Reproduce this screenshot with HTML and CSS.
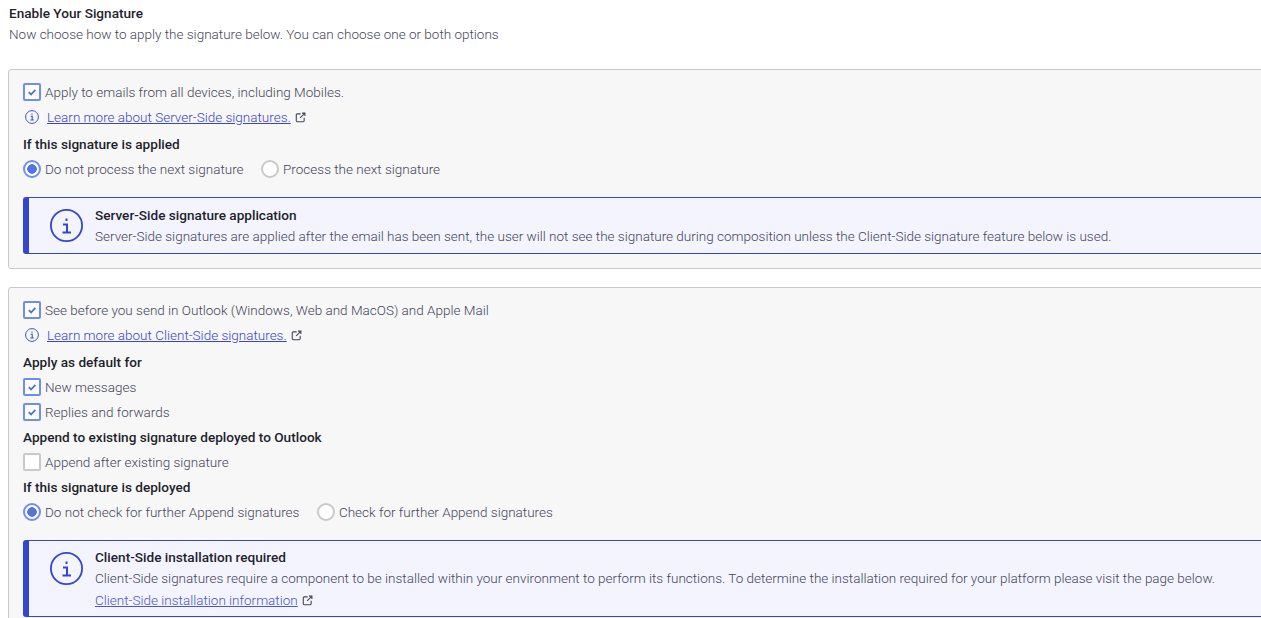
FILE: index.html
```html
<!DOCTYPE html>
<html lang="en">
<head>
<meta charset="utf-8">
<title>Enable Your Signature</title>
<link rel="stylesheet" href="styles.css">
</head>
<body>
<svg class="defs" width="0" height="0" aria-hidden="true">
  <symbol id="ext" viewBox="0 0 12 12"><path d="M6.200 2H2.400A1 1 0 0 0 1.400 3v6.600a1 1 0 0 0 1 1H9a1 1 0 0 0 1-1V6.200M7.600 1.200h3.200v3.200M10.600 1.400L5.600 6.400" fill="none" stroke="currentColor" stroke-width="1.200"/></symbol>
  <symbol id="info" viewBox="0 0 14 14"><circle cx="7" cy="7" r="6.400" fill="none" stroke="currentColor" stroke-width="1"/><path d="M7 3.500v1.300M5.600 6.300H7.200V10M5.400 10H8.800" fill="none" stroke="currentColor" stroke-width="1.100"/></symbol>
  <symbol id="info-big" viewBox="0 0 33 33"><circle cx="16.500" cy="16.500" r="15.600" fill="none" stroke="currentColor" stroke-width="1.800"/><path d="M16.500 9.500v2.600M13 15.500H17V23.500M12.500 23.500H21" fill="none" stroke="currentColor" stroke-width="2"/></symbol>
  <symbol id="check" viewBox="0 0 10 10"><path d="M1.800 5.200L4.100 7.500L8.400 2.800" fill="none" stroke="currentColor" stroke-width="1.800"/></symbol>
</svg>
<main class="page">
  <h1 class="title">Enable Your Signature</h1>
  <p class="subtitle">Now choose how to apply the signature below. You can choose one or both options</p>

  <section class="card card-one">
    <div class="row"><span class="box on"><svg class="tick"><use href="#check"/></svg></span>Apply to emails from all devices, including Mobiles.</div>
    <div class="row link-row"><svg class="small-info"><use href="#info"/></svg><a class="link" href="#">Learn more about Server-Side signatures.</a><svg class="ext"><use href="#ext"/></svg></div>
    <div class="row heading">If this signature is applied</div>
    <div class="row radios">
      <span class="radio-item"><span class="radio on"></span>Do not process the next signature</span>
      <span class="radio-item"><span class="radio"></span>Process the next signature</span>
    </div>
    <div class="note">
      <svg class="note-icon"><use href="#info-big"/></svg>
      <div>
        <div class="note-title">Server-Side signature application</div>
        <div class="note-text">Server-Side signatures are applied after the email has been sent, the user will not see the signature during composition unless the Client-Side signature feature below is used.</div>
      </div>
    </div>
  </section>

  <section class="card card-two">
    <div class="row"><span class="box on"><svg class="tick"><use href="#check"/></svg></span>See before you send in Outlook (Windows, Web and MacOS) and Apple Mail</div>
    <div class="row link-row"><svg class="small-info"><use href="#info"/></svg><a class="link" href="#">Learn more about Client-Side signatures.</a><svg class="ext"><use href="#ext"/></svg></div>
    <div class="row heading">Apply as default for</div>
    <div class="row"><span class="box on"><svg class="tick"><use href="#check"/></svg></span>New messages</div>
    <div class="row"><span class="box on"><svg class="tick"><use href="#check"/></svg></span>Replies and forwards</div>
    <div class="row heading">Append to existing signature deployed to Outlook</div>
    <div class="row"><span class="box"></span>Append after existing signature</div>
    <div class="row heading">If this signature is deployed</div>
    <div class="row radios">
      <span class="radio-item"><span class="radio on"></span>Do not check for further Append signatures</span>
      <span class="radio-item"><span class="radio"></span>Check for further Append signatures</span>
    </div>
    <div class="note note-tall">
      <svg class="note-icon"><use href="#info-big"/></svg>
      <div>
        <div class="note-title">Client-Side installation required</div>
        <div class="note-text">Client-Side signatures require a component to be installed within your environment to perform its functions. To determine the installation required for your platform please visit the page below.</div>
        <div class="note-link"><a class="link-soft" href="#">Client-Side installation information</a><svg class="ext"><use href="#ext"/></svg></div>
      </div>
    </div>
  </section>
</main>
</body>
</html>
```
FILE: styles.css
```css
html, body {
  margin: 0;
  padding: 0;
  height: 618px;
  overflow: hidden;
  background: #fff;
}
body {
  font-family: Roboto, "Liberation Sans", sans-serif;
  font-size: 13.500px;
  color: #5b5b6b;
}
.defs { position: absolute; }
.page {
  width: 1400px;
  padding: 5px 0 0 8px;
}
.title {
  margin: 0;
  padding-left: 1px;
  font-size: 13.600px;
  line-height: 17px;
  font-weight: 500;
  color: #1f1f2e;
}
.subtitle {
  margin: 2px 0 0;
  padding-left: 1px;
  line-height: 20px;
  font-weight: 300;
  color: #45455a;
}
.card {
  box-sizing: border-box;
  width: 1380px;
  background: #f7f7f7;
  border: 1px solid #c9c9c9;
  border-radius: 3px;
  padding: 9px 14px 14px;
}
.card-one { margin-top: 25px; height: 200px; }
.card-two { margin-top: 18px; height: 340px; }
.row {
  display: flex;
  align-items: center;
  height: 25px;
  font-weight: 300;
  color: #45455a;
}
.link-row { margin-bottom: 2px; }
.heading {
  font-size: 13.600px;
  font-weight: 500;
  color: #1f1f2e;
}
.box {
  box-sizing: border-box;
  flex: none;
  width: 18px;
  height: 18px;
  margin-right: 4px;
  border: 2px solid #c9c9c9;
  border-radius: 2px;
  background: #fff;
  display: flex;
  align-items: center;
  justify-content: center;
}
.box.on { border-color: #6d8df0; }
.tick {
  width: 10px;
  height: 10px;
  color: #4a6fdc;
}
.small-info {
  flex: none;
  width: 14px;
  height: 14px;
  margin: 0 8px 0 2px;
  color: #3f4fd0;
}
.link {
  color: #3b45c9;
  text-decoration: underline;
}
.link-soft {
  color: #4a55cf;
  text-decoration: underline;
}
.ext {
  width: 11px;
  height: 11px;
  margin: 1px 0 0 4px;
  color: #45455a;
  flex: none;
}
.radios { gap: 17.500px; }
.radio-item { display: flex; align-items: center; }
.radio {
  box-sizing: border-box;
  width: 18px;
  height: 18px;
  margin-right: 4px;
  border: 2px solid #c9c9c9;
  border-radius: 50%;
  background: #fff;
}
.radio.on {
  border-color: #6d8df0;
  background: radial-gradient(circle, #4f74ee 0 4.500px, #fff 5px);
}
.note {
  display: flex;
  align-items: flex-start;
  margin-top: 16px;
  padding: 7px 0 6px 0;
  background: #f3f4fe;
  border: 1px solid #3346cf;
  border-left: 6px solid #3346cf;
  border-radius: 3px;
}
.note-tall { padding: 6px 0 5px 0; }
.note-icon {
  flex: none;
  width: 33px;
  height: 33px;
  margin: 4px 12px 0 21px;
  color: #3346cf;
}
.note-tall .note-icon { margin-top: 5px; }
.note-title {
  font-size: 13.600px;
  font-weight: 500;
  line-height: 20px;
  color: #1f1f2e;
}
.note-text {
  font-weight: 300;
  line-height: 22px;
  color: #45455a;
}
.note-link { line-height: 22px; display: flex; align-items: center; font-weight: 300; }
```
